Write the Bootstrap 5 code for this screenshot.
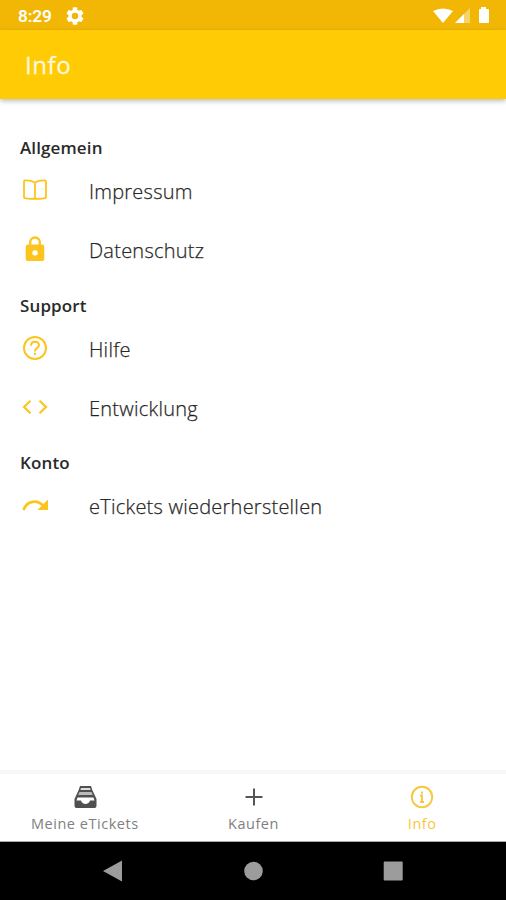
<!DOCTYPE html>
<html lang="de">
<head>
<meta charset="utf-8">
<meta name="viewport" content="width=device-width, initial-scale=1">
<title>Info</title>
<link href="https://cdn.jsdelivr.net/npm/bootstrap@5.3.0/dist/css/bootstrap.min.css" rel="stylesheet">
<style>
body{font-family:"Open Sans",sans-serif;color:#222;background:#fff}
.screen{width:506px;height:900px}
.status{height:30px;background:#f2b705;font:600 17.3px/30px Roboto,sans-serif;padding:1px 15px 0 18px}
.status .clock{letter-spacing:-.15px}
.status .gear{margin-left:14px}
.appbar{height:69px;background:#ffcb05;box-shadow:0 2px 5px rgba(0,0,0,.28);padding:1px 0 0 25px}
.appbar h1{font-size:24px;line-height:32px;color:#fff8dc;font-weight:400;letter-spacing:.6px;-webkit-text-stroke:.3px #fff8dc}
.content{padding-top:24.5px}
.group{height:157.6px}
.group h2{font-size:17px;line-height:24px;font-weight:600;color:#2a2a2a;height:39px;padding:12.45px 0 0 20px;letter-spacing:.12px;margin:0}
.entry{height:59px;padding-left:20px}
.entry svg{width:30px;height:30px;margin-top:-4px;margin-right:39px;color:#fcc41c}
.entry span{font-size:20px;font-weight:300;line-height:28px;color:#1c1c1c;letter-spacing:.24px;-webkit-text-stroke:.25px #333}
.tabs{height:72px;border-top:4px solid #f7f7f7;border-bottom:1px solid #aaa}
.tab-item{font-size:14.5px;line-height:20px;color:#808080;letter-spacing:.53px;padding:7px 0 0 1px}
.tab-item svg{width:28px;height:28px;color:#555;margin:2px 0 3px}
.tab-item.current,.tab-item.current svg{color:#f9c73b}
.sysbar{height:58px;background:#000;padding:0 43px}
</style>
<script src="https://cdn.jsdelivr.net/npm/bootstrap@5.3.0/dist/js/bootstrap.bundle.min.js"></script>
</head>
<body>
<div class="screen d-flex flex-column overflow-hidden">
  <div class="status d-flex align-items-center text-white flex-shrink-0">
    <span class="clock">8:29</span>
    <svg class="gear" width="18" height="18" viewBox="2 2 20 20" fill="currentColor"><path d="M19.14 12.94c.04-.3.06-.61.06-.94 0-.32-.02-.64-.07-.94l2.03-1.58a.49.49 0 0 0 .12-.61l-1.92-3.32a.49.49 0 0 0-.59-.22l-2.39.96c-.5-.38-1.03-.7-1.62-.94l-.36-2.54a.48.48 0 0 0-.48-.41h-3.84c-.24 0-.43.17-.47.41l-.36 2.54c-.59.24-1.13.57-1.62.94l-2.39-.96a.48.48 0 0 0-.59.22L2.74 8.87c-.12.21-.08.47.12.61l2.03 1.58c-.05.3-.09.63-.09.94s.02.64.07.94l-2.03 1.58a.49.49 0 0 0-.12.61l1.92 3.32c.12.22.37.29.59.22l2.39-.96c.5.38 1.03.7 1.62.94l.36 2.54c.05.24.24.41.48.41h3.84c.24 0 .44-.17.47-.41l.36-2.54c.59-.24 1.13-.56 1.62-.94l2.39.96c.22.08.47 0 .59-.22l1.92-3.32c.12-.22.07-.47-.12-.61zM12 15.600a3.600 3.600 0 1 1 0-7.200 3.600 3.600 0 0 1 0 7.200z"/></svg>
    <svg class="ms-auto" width="58" height="18" viewBox="0 0 58 18" fill="currentColor"><path d="M0 4Q10-1 20 4L10 16z"/><path d="M22 16 37 1v15z" opacity=".4"/><path d="M22 16 31 7v9z"/><path d="M48 2V0h5v2h2q1 0 1 1v12q0 1-1 1h-8q-1 0-1-1V3q0-1 1-1z"/></svg>
  </div>
  <header class="appbar d-flex align-items-center flex-shrink-0"><h1 class="m-0">Info</h1></header>
  <main class="content flex-grow-1">
    <section class="group">
      <h2>Allgemein</h2>
      <div class="entry d-flex align-items-center"><svg viewBox="0 0 30 30" fill="none" stroke="currentColor" stroke-width="1.8" stroke-linejoin="round"><path d="M15 7.5Q10.500 5 5 5.500Q4 5.700 4 6.700V22Q4 23 5 23.200Q10 24.500 15 23.500Q20 24.500 25 23.200Q26 23 26 22V6.700Q26 5.700 25 5.500Q19.500 5 15 7.500zV23.500"/></svg><span>Impressum</span></div>
      <div class="entry d-flex align-items-center"><svg viewBox="0 0 30 30" fill="none" stroke="currentColor"><path stroke-width="2.300" d="M10.200 12V8.300a4.800 4.800 0 0 1 9.600 0V12"/><path fill="currentColor" stroke="none" fill-rule="evenodd" d="M7.700 10.500H22.300q2 0 2 2V25q0 2-2 2H7.700q-2 0-2-2V12.500q0-2 2-2zM15 16.200a2.700 2.700 0 1 0 0 5.400 2.700 2.700 0 0 0 0-5.400z"/></svg><span>Datenschutz</span></div>
    </section>
    <section class="group">
      <h2>Support</h2>
      <div class="entry d-flex align-items-center"><svg viewBox="0 0 30 30" fill="none" stroke="currentColor" stroke-width="2"><circle cx="15" cy="15" r="11"/><path d="M11 12.800C11 7.200 19 7.500 19 12.200C19 15 15 14.900 15 18.500M15 19.800v2.300"/></svg><span>Hilfe</span></div>
      <div class="entry d-flex align-items-center"><svg viewBox="0 0 30 30" fill="none" stroke="currentColor" stroke-width="2.200"><path d="M10.500 8.700 4 15l6.500 6.300M19.500 8.700 26 15l-6.500 6.300"/></svg><span>Entwicklung</span></div>
    </section>
    <section class="group">
      <h2>Konto</h2>
      <div class="entry d-flex align-items-center"><svg viewBox="0 0 30 30" fill="none" stroke="currentColor" stroke-width="2.700"><path d="M3.500 20C7 10.500 17 9 24 16.500"/><path fill="currentColor" stroke="none" d="M28 9.500V20H17.500z"/></svg><span>eTickets wiederherstellen</span></div>
    </section>
  </main>
  <nav class="tabs row g-0 text-center flex-shrink-0">
    <div class="tab-item col d-flex flex-column align-items-center"><svg viewBox="0 0 28 28"><path fill="#505050" d="M9 3H20l1.300 4 1.900 4 2.300 5V23q0 2-2 2H5.500q-2 0-2-2V16l2.300-5L7.700 7z"/><path fill="#ddd" d="M10 5h9l.6 2H9.400z"/><path fill="#bbb" d="M8.500 9h12l1.300 3h-14.600z"/><path fill="#fff" d="M6.500 14.500h16l1 3h-4.500c-1 4.500-8 4.500-9 0H5.500z"/></svg>Meine eTickets</div>
    <div class="tab-item col d-flex flex-column align-items-center"><svg viewBox="0 0 28 28" fill="none" stroke="currentColor" stroke-width="2"><path d="M14 5.500v17M5.500 14h17"/></svg>Kaufen</div>
    <div class="tab-item current col d-flex flex-column align-items-center"><svg viewBox="0 0 28 28" fill="none" stroke="currentColor" stroke-width="1.900"><circle cx="14" cy="14" r="10.200"/><path d="M14 8.500v2.200M12 12.500h2v6.500M12 19h4"/></svg>Info</div>
  </nav>
  <div class="sysbar d-flex justify-content-around align-items-center flex-shrink-0">
    <svg width="20" height="22" fill="#9c9c9c"><path d="M0 11 19 .5v21z"/></svg>
    <svg width="20" height="20" fill="#9c9c9c"><circle cx="10.500" cy="10" r="9.300"/></svg>
    <svg width="20" height="20" fill="#9c9c9c"><rect x=".7" y=".5" width="19" height="19" rx="1"/></svg>
  </div>
</div>
</body>
</html>
